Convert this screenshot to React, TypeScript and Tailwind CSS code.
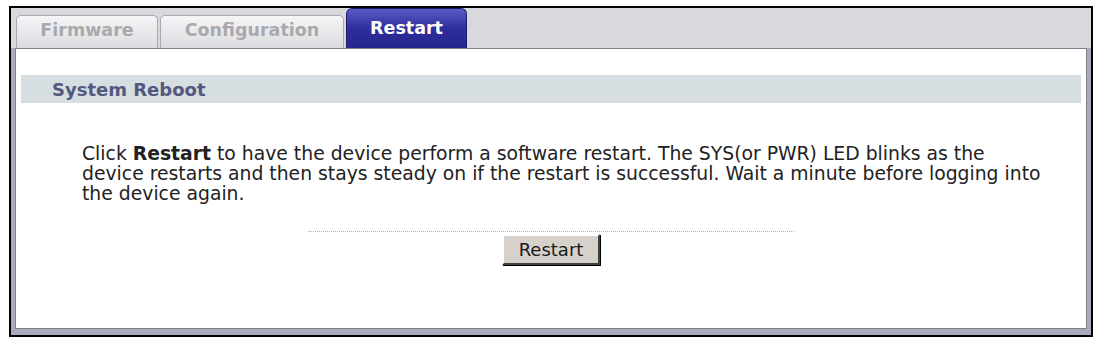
const FONT = "font-['DejaVu_Sans','Verdana',sans-serif]";

function Tab({ label, active, width }: { label: string; active?: boolean; width: string }) {
  if (active) {
    return (
      <div
        className={`${width} flex h-[40px] items-center justify-center rounded-t-[6px] border border-b-0 border-[#1c1c70] bg-gradient-to-b from-[#5a5ac4] via-[#2e2e9c] to-[#262690] text-[17.5px] font-bold text-white`}
      >
        {label}
      </div>
    );
  }
  return (
    <div
      className={`${width} flex h-[33px] items-center justify-center rounded-t-[5px] border border-b-0 border-[#a9a9b0] bg-gradient-to-b from-[#f6f6f8] to-[#dcdce0] pb-[3px] text-[17.5px] font-bold text-[#a9a9ad]`}
    >
      {label}
    </div>
  );
}

export default function App() {
  return (
    <div className={`h-[340px] w-[1096px] bg-white pl-[9px] pt-[6px] ${FONT}`}>
      <div className="flex h-[331px] w-[1084px] flex-col border-[2px] border-black bg-[#d9d8dd]">
        <div className="flex items-end gap-[2px] pl-[5px]">
          <Tab label="Firmware" width="w-[142px]" />
          <Tab label="Configuration" width="w-[184px]" />
          <Tab label="Restart" width="w-[121px]" active />
        </div>
        <div className="flex flex-1 flex-col bg-[#a9abbd] pb-[6px] pl-[4px] pr-[4px]">
          <div className="flex-1 border border-[#7f808c] bg-white pt-[26px]">
            <div className="mx-[5px] flex h-[28px] items-center bg-[#d6dee1] pl-[31px] text-[18px] font-bold text-[#55587e]">
              System Reboot
            </div>
            <p className="mt-[41px] whitespace-nowrap pl-[66px] text-[18.8px] leading-[20px] text-[#222]">
              Click <b>Restart</b> to have the device perform a software restart. The SYS(or PWR) LED blinks as the
              <br />
              device restarts and then stays steady on if the restart is successful. Wait a minute before logging into
              <br />
              the device again.
            </p>
            <div className="mt-[27px] flex flex-col items-center">
              <div className="w-[486px] border-t border-dotted border-[#b5b5b5]" />
              <button className="mt-[2px] h-[31px] w-[98px] border-2 border-b-[#404040] border-l-white border-r-[#404040] border-t-white bg-[#d6d2cb] text-[18px] text-[#1a1a1a] shadow-[1px_1px_0_#000]">
                Restart
              </button>
            </div>
          </div>
        </div>
      </div>
    </div>
  );
}
